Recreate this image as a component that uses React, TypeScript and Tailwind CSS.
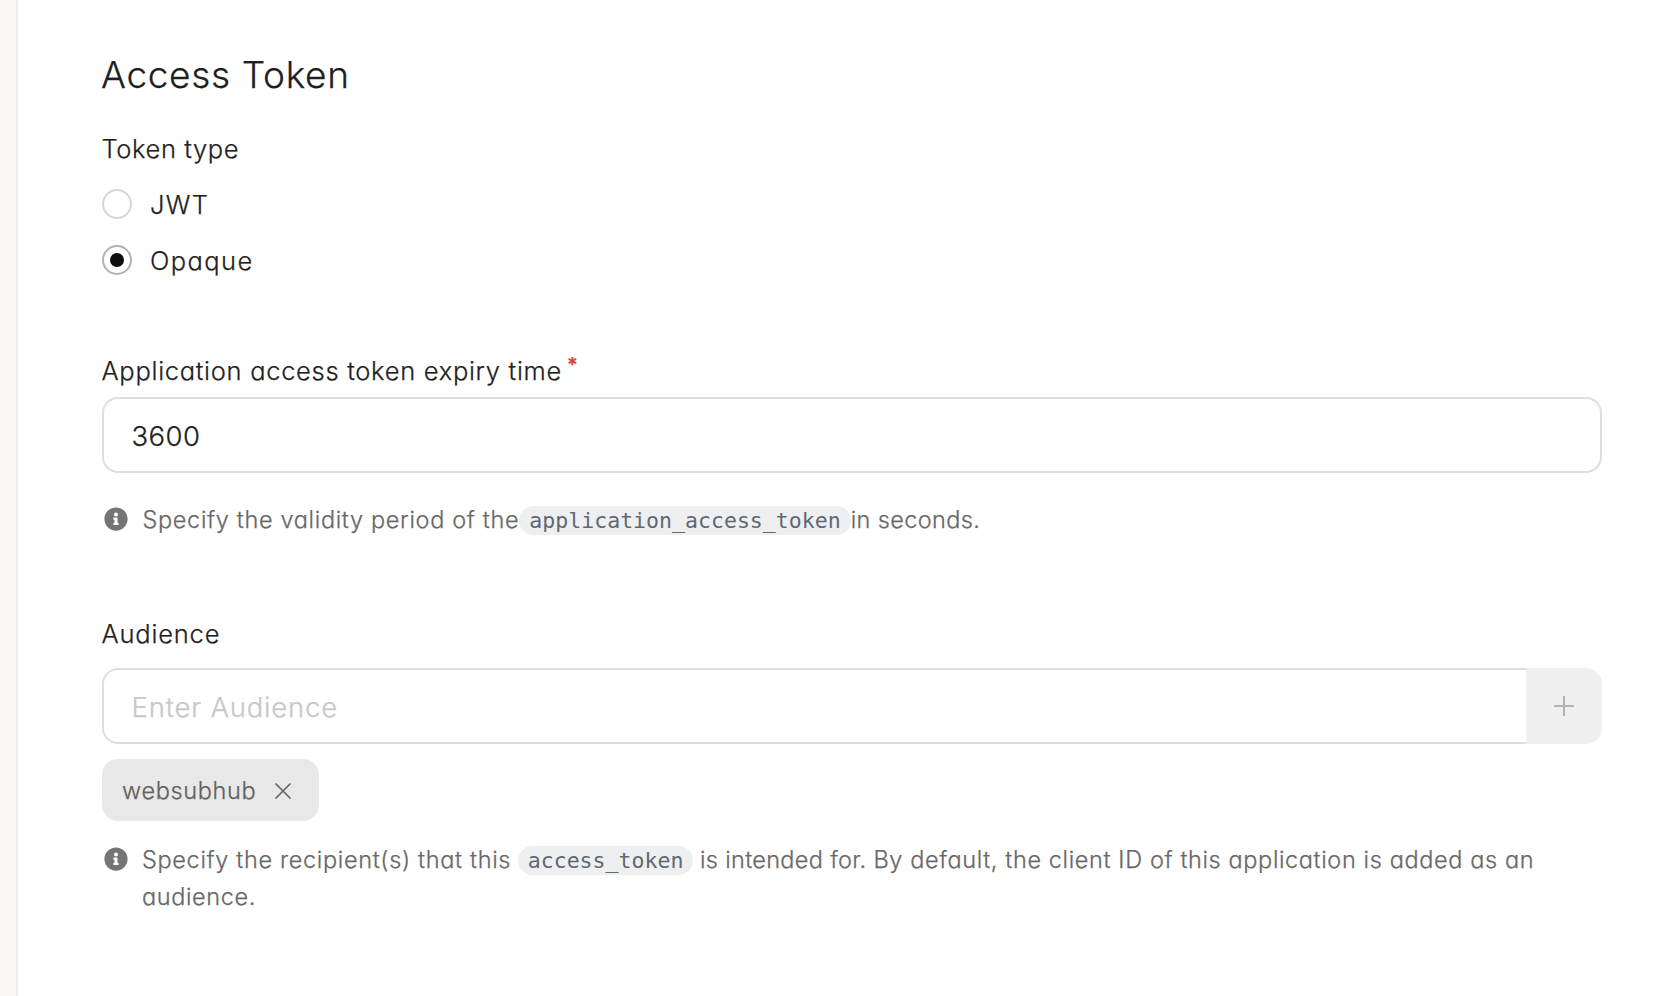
import React, { useState } from 'react';
import type { ReactNode } from 'react';
import { FaInfoCircle } from 'react-icons/fa';

function Radio({ label, checked, spacing, onSelect }: { label: string; checked: boolean; spacing: string; onSelect: () => void }) {
  return (
    <button type="button" role="radio" aria-checked={checked} onClick={onSelect} className="flex h-8 items-center gap-[18px]">
      <span className={`flex size-[30px] items-center justify-center rounded-full border-2 ${checked ? 'border-[#b3b3b3]' : 'border-[#d6d6d6]'}`}>
        {checked && <span className="size-[14px] rounded-full bg-[#0d0d0d]" />}
      </span>
      <span className={`pt-[2px] text-[25.5px] leading-8 ${spacing}`}>{label}</span>
    </button>
  );
}

function Code({ children }: { children: ReactNode }) {
  return (
    <code className="rounded-[15px] bg-[#eeeff1] px-[10px] py-[2px] font-['DejaVu_Sans_Mono',monospace] text-[21.56px] font-normal tracking-normal text-[#5f6973] [-webkit-text-stroke:0]">
      {children}
    </code>
  );
}

export default function App() {
  const [type, setType] = useState('Opaque');

  return (
    <div className="flex h-[996px] w-[1664px] overflow-hidden bg-[#faf9f7] font-['Inter',sans-serif] font-light text-[#1f1f1f] [-webkit-text-stroke:0.25px] [font-feature-settings:'cv11']">
      <main className="ml-4 flex flex-1 flex-col border-l-2 border-[#ededed] bg-white pt-[51px] pr-[62px] pl-[84px]">
        <h1 className="ml-[-1px] text-[37px] leading-[48px] font-light tracking-[0.66px]">Access Token</h1>

        <section className="mt-[34px]">
          <div className="ml-[-0.5px] text-[25.5px] leading-8 tracking-[0.6px]">Token type</div>
          <div role="radiogroup" className="mt-[23px] flex flex-col gap-6">
            <Radio label="JWT" spacing="tracking-[1.3px]" checked={type === 'JWT'} onSelect={() => setType('JWT')} />
            <Radio label="Opaque" spacing="tracking-[1.4px]" checked={type === 'Opaque'} onSelect={() => setType('Opaque')} />
          </div>
        </section>

        <section className="mt-[79px]">
          <div className="ml-[-0.5px] flex items-start text-[25.5px] leading-8 tracking-[0.7px]">
            Application access token expiry time
            <span className="ml-[5px] text-[20px] leading-[20px] font-semibold text-[#d9453c]">*</span>
          </div>
          <div className="mt-[10px] flex h-[76px] items-center rounded-[16px] border-2 border-[#dedede] pt-[3px] pl-[27.5px] text-[27.5px] tracking-[0.4px]">3600</div>
          <div className="mt-[31px] flex h-8 items-center text-[23.5px] leading-8 text-[#686868]">
            <FaInfoCircle className="ml-[2px] size-6 shrink-0 -translate-y-[1px] text-[#757575]" />
            <p className="ml-[14.5px] whitespace-nowrap">
              <span className="tracking-[0.66px]">Specify the validity period of the</span>
              <Code>application_access_token</Code>
              <span className="tracking-[0.37px]">in seconds.</span>
            </p>
          </div>
        </section>

        <section className="mt-[82px]">
          <div className="ml-[-0.5px] text-[25.5px] leading-8 tracking-[0.8px]">Audience</div>
          <div className="mt-[18px] flex h-[76px]">
            <div className="flex flex-1 items-center rounded-l-[16px] border-2 border-r-0 border-[#dedede] pt-[3px] pl-[27.5px] text-[27.5px] tracking-[0.8px] text-[#c8c8c8]">Enter Audience</div>
            <button type="button" aria-label="Add" className="flex w-[76px] items-center justify-center rounded-r-[16px] bg-[#f0f0f0]">
              <svg className="size-5" viewBox="0 0 20 20" fill="none" stroke="#b3b3b3" strokeWidth="2">
                <path d="M10 0v20M0 10h20" />
              </svg>
            </button>
          </div>
          <div className="mt-[15px] flex h-[62px] w-[217px] items-center rounded-[16px] bg-[#e8e8e8] pl-[20px] text-[#616161]">
            <span className="w-[153px] pt-[2px] text-[23.5px] leading-8 tracking-[0.65px]">websubhub</span>
            <svg className="size-4 translate-y-[1px]" viewBox="0 0 16 16" fill="none" stroke="#666" strokeWidth="1.7" strokeLinecap="round">
              <path d="M1 1l14 14M15 1L1 15" />
            </svg>
          </div>
          <div className="mt-[21px] flex items-start text-[23.5px] leading-[35.5px] text-[#686868]">
            <FaInfoCircle className="mt-[5px] ml-[2px] size-6 shrink-0 text-[#757575]" />
            <p className="ml-[14px] whitespace-nowrap">
              <span className="tracking-[0.66px]">Specify the recipient(s) that this</span> <Code>access_token</Code>{' '}
              <span className="tracking-[0.32px]">is intended for. </span>
              <span className="tracking-[0.62px]">
                By default, the client ID of this application is added as an
                <br />
                audience.
              </span>
            </p>
          </div>
        </section>
      </main>
    </div>
  );
}
